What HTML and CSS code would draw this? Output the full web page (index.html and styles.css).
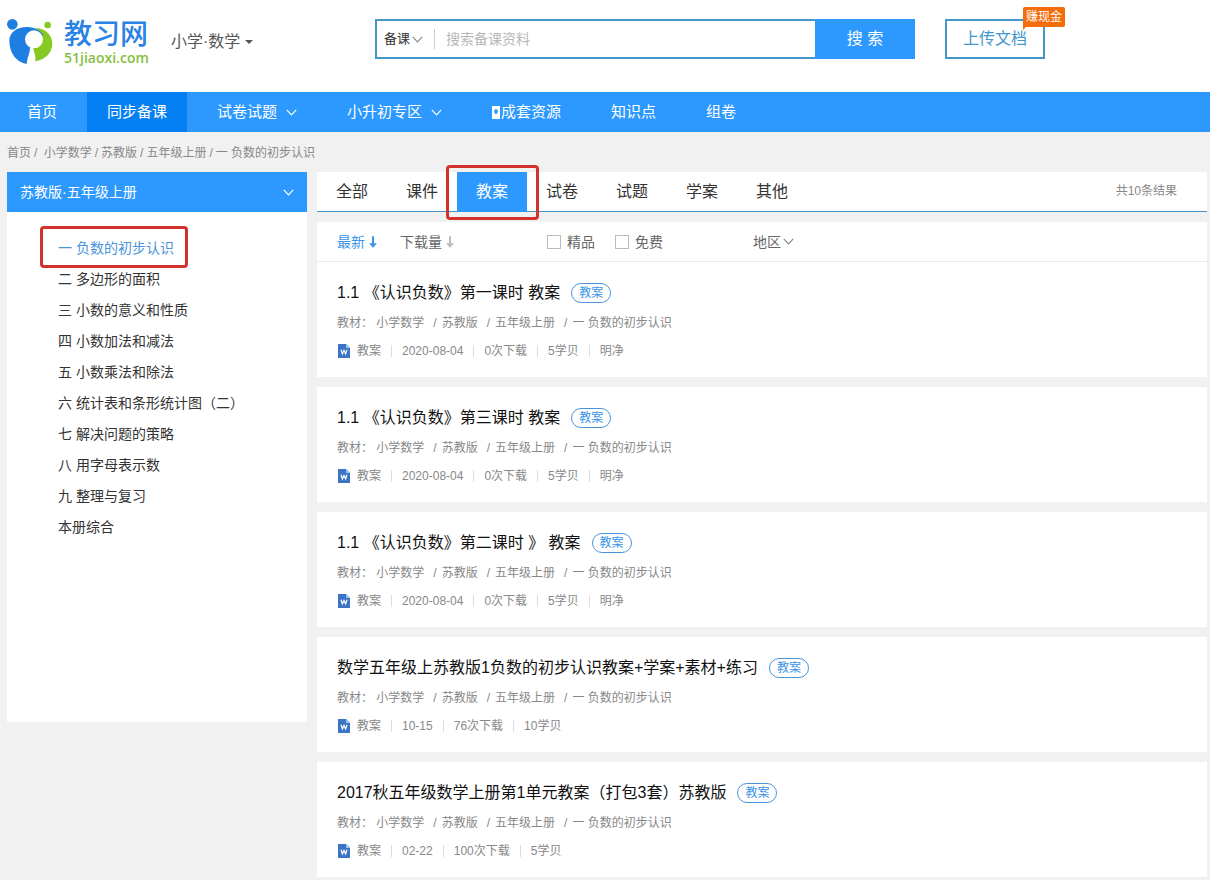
FILE: index.html
```html
<!DOCTYPE html>
<html lang="zh-CN">
<head>
<meta charset="utf-8">
<title>教习网 - 同步备课</title>
<link rel="stylesheet" href="styles.css">
</head>
<body>
<svg class="defs" aria-hidden="true">
  <symbol id="chevron" viewBox="0 0 11 7"><path d="M.8.8 5.500 5.800 10.200.8" fill="none" stroke="currentColor" stroke-width="1.2"/></symbol>
  <symbol id="arrow" viewBox="0 0 9 13"><path d="M3.400 0h2.200v8H9L4.500 13 0 8h3.400z" fill="currentColor"/></symbol>
  <symbol id="word" viewBox="0 0 12 14"><path d="M0 0h8l4 4v10H0z" fill="#3b74c4"/><path d="M8 0v4h4z" fill="#9cc3f0"/><path d="M3 5.800 4.400 9.800 6 6.400 7.600 9.800 9 5.800" fill="none" stroke="#fff" stroke-width="1.2"/></symbol>
</svg>

<header class="header">
  <a class="logo" href="#">
    <svg class="logo-mark" viewBox="21 18 141 144" aria-hidden="true">
      <circle cx="37" cy="37" r="16" fill="#1f7fe0"/>
      <circle cx="143" cy="39" r="10" fill="#86c922"/>
      <path d="M108 48C138 50 157 70 157 96C156 122 136 144 105 148C109 136 104 126 98 104L120 70Z" fill="#86c922"/>
      <path d="M28 86C28 60 52 44 84 45C104 46 120 53 130 70L104 82L90 108C90 124 82 134 80 156C50 150 28 124 28 86Z" fill="#1f7fe0"/>
      <circle cx="102" cy="82" r="27" fill="#fff"/>
    </svg>
    <span class="logo-text">
      <span class="logo-name">教习网</span>
      <span class="logo-domain">51jiaoxi.com</span>
    </span>
  </a>
  <button class="subject" type="button">小学·数学<span class="caret"></span></button>
  <form class="search">
    <label class="picker">
      <select class="search-type" aria-label="搜索类型"><option>备课</option></select>
      <svg class="chevron"><use href="#chevron"/></svg>
    </label>
    <input class="search-input" type="text" placeholder="搜索备课资料" aria-label="搜索备课资料">
    <button class="search-button" type="submit">搜 索</button>
  </form>
  <a class="upload" href="#">上传文档<span class="upload-tip">赚现金</span></a>
</header>

<nav class="nav">
  <a class="nav-item" href="#">首页</a>
  <a class="nav-item nav-item-active" href="#">同步备课</a>
  <a class="nav-item" href="#">试卷试题<svg class="chevron"><use href="#chevron"/></svg></a>
  <a class="nav-item" href="#">小升初专区<svg class="chevron"><use href="#chevron"/></svg></a>
  <a class="nav-item" href="#"><svg class="nav-glyph" viewBox="0 0 8 13"><path d="M0 0h8v13H0z" fill="#fff"/><ellipse cx="4" cy="5.500" rx="1.800" ry="2.500" fill="#2d99ff"/></svg>成套资源</a>
  <a class="nav-item" href="#">知识点</a>
  <a class="nav-item" href="#">组卷</a>
</nav>

<div class="crumbs"><a href="#">首页</a><i>/</i>&nbsp;<a href="#">小学数学</a><i>/</i><a href="#">苏教版</a><i>/</i><a href="#">五年级上册</a><i>/</i><a href="#">一 负数的初步认识</a></div>

<div class="layout">
  <aside class="sidebar">
    <button class="book" type="button">苏教版·五年级上册<svg class="chevron"><use href="#chevron"/></svg></button>
    <ul class="chapters">
      <li><a class="chapter chapter-active" href="#">一 负数的初步认识<span class="mark mark-chapter"></span></a></li>
      <li><a class="chapter" href="#">二 多边形的面积</a></li>
      <li><a class="chapter" href="#">三 小数的意义和性质</a></li>
      <li><a class="chapter" href="#">四 小数加法和减法</a></li>
      <li><a class="chapter" href="#">五 小数乘法和除法</a></li>
      <li><a class="chapter" href="#">六 统计表和条形统计图（二）</a></li>
      <li><a class="chapter" href="#">七 解决问题的策略</a></li>
      <li><a class="chapter" href="#">八 用字母表示数</a></li>
      <li><a class="chapter" href="#">九 整理与复习</a></li>
      <li><a class="chapter" href="#">本册综合</a></li>
    </ul>
  </aside>

  <main class="content">
    <div class="tabs">
      <a class="tab" href="#">全部</a>
      <a class="tab" href="#">课件</a>
      <a class="tab tab-active" href="#">教案<span class="mark mark-tab"></span></a>
      <a class="tab" href="#">试卷</a>
      <a class="tab" href="#">试题</a>
      <a class="tab" href="#">学案</a>
      <a class="tab" href="#">其他</a>
      <span class="count">共10条结果</span>
    </div>

    <div class="filters">
      <div class="sorts">
        <button class="sort sort-active" type="button">最新<svg class="arrow"><use href="#arrow"/></svg></button>
        <button class="sort" type="button">下载量<svg class="arrow"><use href="#arrow"/></svg></button>
      </div>
      <div class="checks">
        <label class="check"><input type="checkbox">精品</label>
        <label class="check"><input type="checkbox">免费</label>
      </div>
      <label class="picker">
        <select class="region" aria-label="地区"><option>地区</option></select>
        <svg class="chevron"><use href="#chevron"/></svg>
      </label>
    </div>

    <div class="results">
      <article class="card">
        <h2 class="title"><a href="#">1.1 《认识负数》第一课时 教案</a><span class="tag">教案</span></h2>
        <p class="source">教材： 小学数学<i>/</i>苏教版<i>/</i>五年级上册<i>/</i>一 负数的初步认识</p>
        <p class="info"><svg class="word"><use href="#word"/></svg><span>教案</span><span>2020-08-04</span><span>0次下载</span><span>5学贝</span><span>明净</span></p>
      </article>
      <article class="card">
        <h2 class="title"><a href="#">1.1 《认识负数》第三课时 教案</a><span class="tag">教案</span></h2>
        <p class="source">教材： 小学数学<i>/</i>苏教版<i>/</i>五年级上册<i>/</i>一 负数的初步认识</p>
        <p class="info"><svg class="word"><use href="#word"/></svg><span>教案</span><span>2020-08-04</span><span>0次下载</span><span>5学贝</span><span>明净</span></p>
      </article>
      <article class="card">
        <h2 class="title"><a href="#">1.1 《认识负数》第二课时 》 教案</a><span class="tag">教案</span></h2>
        <p class="source">教材： 小学数学<i>/</i>苏教版<i>/</i>五年级上册<i>/</i>一 负数的初步认识</p>
        <p class="info"><svg class="word"><use href="#word"/></svg><span>教案</span><span>2020-08-04</span><span>0次下载</span><span>5学贝</span><span>明净</span></p>
      </article>
      <article class="card">
        <h2 class="title"><a href="#">数学五年级上苏教版1负数的初步认识教案+学案+素材+练习</a><span class="tag">教案</span></h2>
        <p class="source">教材： 小学数学<i>/</i>苏教版<i>/</i>五年级上册<i>/</i>一 负数的初步认识</p>
        <p class="info"><svg class="word"><use href="#word"/></svg><span>教案</span><span>10-15</span><span>76次下载</span><span>10学贝</span></p>
      </article>
      <article class="card">
        <h2 class="title"><a href="#">2017秋五年级数学上册第1单元教案（打包3套）苏教版</a><span class="tag">教案</span></h2>
        <p class="source">教材： 小学数学<i>/</i>苏教版<i>/</i>五年级上册<i>/</i>一 负数的初步认识</p>
        <p class="info"><svg class="word"><use href="#word"/></svg><span>教案</span><span>02-22</span><span>100次下载</span><span>5学贝</span></p>
      </article>
    </div>
  </main>
</div>
</body>
</html>
```

FILE: styles.css
```css
* { box-sizing: border-box; }

body {
  margin: 0;
  background: #f1f1f1;
  color: #333;
  font: 14px/20px "Liberation Sans", "Noto Sans CJK SC", sans-serif;
}

a { color: inherit; text-decoration: none; }
button, select, input { font: inherit; color: inherit; }
button { border: 0; padding: 0; background: none; cursor: pointer; }
select { appearance: none; border: 0; padding: 0; background: none; }
h2, p, ul { margin: 0; padding: 0; font-weight: 400; list-style: none; }

.defs { display: none; }
.chevron { width: 11px; height: 7px; flex: none; }

/* Header */
.header {
  display: flex;
  align-items: flex-start;
  padding: 18px 7px 27px;
  background: #fff;
}

.logo { display: flex; gap: 10px; width: 164px; height: 47px; }
.logo-mark { width: 47px; height: 48px; flex: none; }
.logo-text { display: flex; flex-direction: column; }
.logo-name { color: #2a82e4; font-size: 28px; line-height: 33px; font-weight: 500; }
.logo-domain { color: #86c040; font: 600 14px/14px "Open Sans", sans-serif; }

.subject {
  display: flex;
  align-items: center;
  gap: 5px;
  width: 204px;
  height: 47px;
  color: #555;
  font-size: 16px;
}
.caret { border: 4px solid transparent; border-top-color: #555; border-bottom: 0; }

.search {
  display: flex;
  align-items: center;
  width: 540px;
  height: 40px;
  margin-top: 1px;
  border: 2px solid #4596cb;
  border-right: 0;
}
.picker { display: flex; align-items: center; gap: 2px; color: #888; }
.search .picker { padding: 0 11px 0 7px; border-right: 1px solid #ccc; }
.search-type { width: 26px; color: #333; font-size: 13px; }
.search-input {
  flex: 1;
  min-width: 0;
  padding: 0 11px;
  border: 0;
  outline: 0;
  background: none;
}
.search-input::placeholder { color: #b8b8b8; }
.search-button {
  width: 100px;
  height: 40px;
  background: #2d99ff;
  color: #fff;
  font-size: 16px;
}

.upload {
  position: relative;
  width: 100px;
  margin: 1px 0 0 30px;
  border: 2px solid #4596cb;
  color: #4596cb;
  font-size: 16px;
  line-height: 36px;
  text-align: center;
}
.upload-tip {
  position: absolute;
  top: -14px;
  right: -22px;
  width: 42px;
  border-radius: 2px;
  background: #f56c0a;
  color: #fff;
  font-size: 12px;
  line-height: 20px;
}
.upload-tip::after {
  content: "";
  position: absolute;
  top: 19px;
  left: 0;
  border-top: 4px solid #f56c0a;
  border-right: 4px solid transparent;
}

/* Navigation */
.nav {
  display: flex;
  gap: 10px;
  padding: 0 7px;
  background: #2d99ff;
  color: #fff;
  font-size: 15px;
  line-height: 40px;
}
.nav-item { display: flex; align-items: center; padding: 0 20px; }
.nav-item-active { background: #0580f2; }
.nav-item .chevron { margin-left: 9px; }
.nav-glyph { width: 8px; height: 13px; margin-right: 1px; }

.crumbs { padding: 2px 7px 0; color: #888; font-size: 12px; line-height: 38px; }
.crumbs i { margin: 0 3px; font-style: normal; }

/* Columns */
.layout { display: flex; align-items: flex-start; gap: 10px; padding: 0 3px 0 7px; }

.sidebar { width: 300px; min-height: 550px; flex: none; background: #fff; }
.book {
  display: flex;
  align-items: center;
  justify-content: space-between;
  width: 100%;
  height: 40px;
  padding: 0 13px;
  background: #2d99ff;
  color: #fff;
}
.chapters { padding: 21px 51px; }
.chapter { position: relative; display: inline-block; line-height: 31px; white-space: nowrap; }
.chapters li { height: 31px; }
.chapter-active { color: #4a94dc; }

.mark { position: absolute; border: 3px solid #d2322d; border-radius: 4px; pointer-events: none; }
.mark-chapter { inset: -7px -14px -4px -18px; }
.mark-tab { inset: -7px -12px -8px -11px; z-index: 1; }

.content { flex: 1; min-width: 0; }
.tabs {
  display: flex;
  height: 40px;
  padding-right: 30px;
  border-bottom: 1px solid #4a94c8;
  background: #fff;
  line-height: 39px;
}
.tab { position: relative; width: 70px; height: 40px; font-size: 16px; text-align: center; }
.tab-active { background: #2d99ff; color: #fff; }
.count { margin-left: auto; color: #888; font-size: 12px; }

.filters {
  display: flex;
  align-items: center;
  height: 40px;
  margin-top: 10px;
  padding-left: 20px;
  border-bottom: 1px solid #eaeaea;
  background: #fff;
  color: #666;
}
.sorts { display: flex; gap: 23px; width: 210px; }
.sort { display: flex; align-items: center; gap: 4px; }
.sort-active { color: #3b94e8; }
.arrow { width: 8px; height: 12px; color: #bbb; }
.sort-active .arrow { color: #3b94e8; }
.checks { display: flex; gap: 20px; width: 206px; }
.check { display: flex; align-items: center; gap: 6px; }
.check input {
  appearance: none;
  width: 14px;
  height: 14px;
  margin: 0;
  border: 1px solid #bbb;
  background: #fff;
}
.region { width: 28px; color: #666; }

/* Results */
.results { display: flex; flex-direction: column; gap: 10px; }
.card { padding: 20px 20px 16px; background: #fff; color: #888; font-size: 12px; }
.title { display: flex; align-items: center; gap: 11px; color: #111; font-size: 16px; line-height: 22px; }
.tag {
  padding: 0 7px;
  border: 1px solid #4a94dc;
  border-radius: 10px;
  color: #3b94e8;
  font-size: 12px;
  line-height: 18px;
}
.source { margin-top: 9px; }
.source i { margin: 0 5px 0 9px; font-style: normal; }
.info { display: flex; align-items: center; margin-top: 8px; }
.info span + span { margin-left: 10px; padding-left: 10px; border-left: 1px solid #ddd; line-height: 12px; }
.word { width: 12px; height: 14px; margin: 0 7px 0 1px; }
```
